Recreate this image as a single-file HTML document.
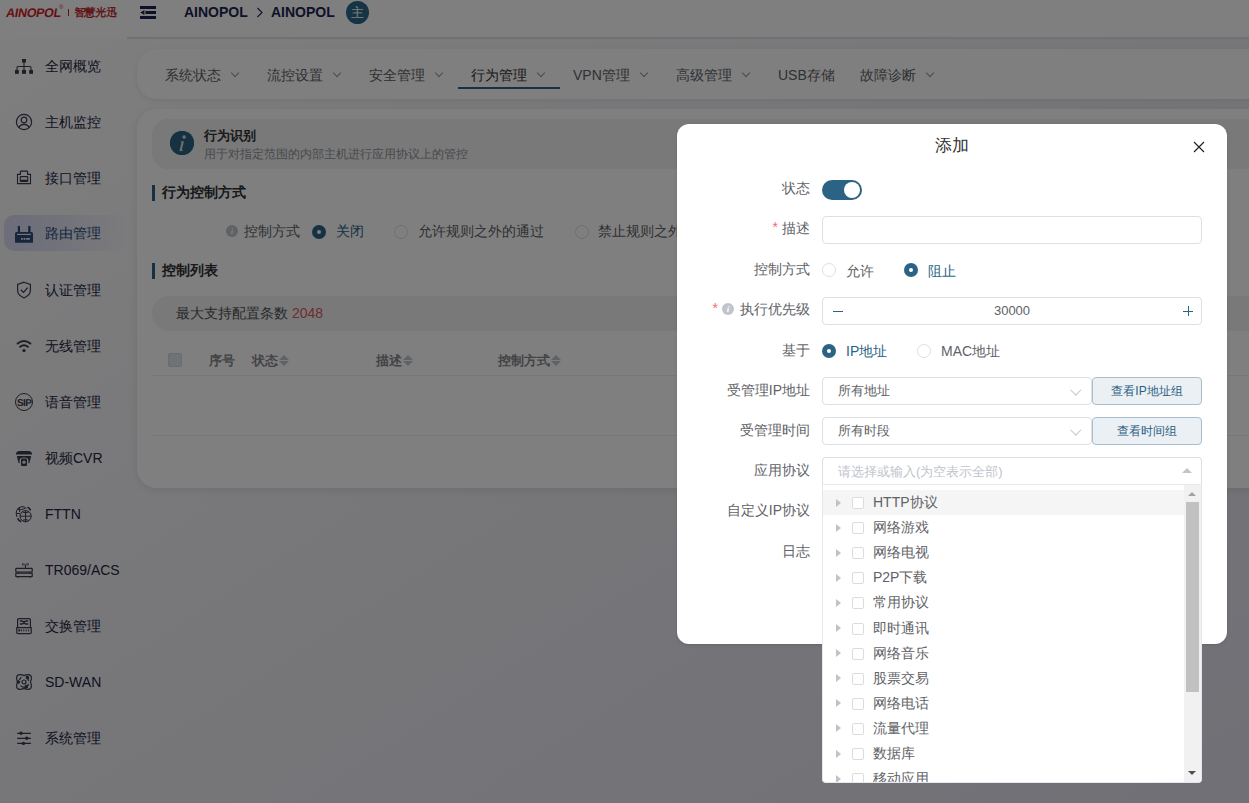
<!DOCTYPE html>
<html><head><meta charset="utf-8">
<style>
*{box-sizing:border-box;margin:0;padding:0}
html,body{width:1249px;height:803px;overflow:hidden}
body{position:relative;background:linear-gradient(to bottom right,#fefefe 0%,#f0f0f5 45%,#e0e0ec 100%);font-family:"Liberation Sans",sans-serif;font-size:14px;color:#303133}
.abs{position:absolute;white-space:nowrap}
#side{left:0;top:0;width:127px;height:803px}
#hdr{left:0;top:0;width:1249px;height:38px;background:#fff}
#hline{left:127px;top:36.8px;width:1122px;height:2px;background:#e2e2e4;box-shadow:0 0 1px rgba(0,0,0,.08)}
.mi{position:absolute;left:0;width:127px;height:36px;line-height:36px}
.mi svg{position:absolute;left:15px;top:9px;width:18px;height:18px}
.mi span{position:absolute;left:45px;top:0;font-size:14px;color:#24263f;white-space:nowrap}
.mi.act{left:4px;width:126px;margin-top:-1.5px;border-radius:10px;background:linear-gradient(90deg,#dadaf6 0%,#e6e6f6 50%,rgba(250,250,252,0) 100%)}
.mi.act svg{left:11px;top:10.5px}
.mi.act span{left:41px;color:#2a4e7e}
#tabs{left:137px;top:48.5px;width:1200px;height:50.5px;background:#fff;border-radius:20px;box-shadow:0 2px 7px rgba(0,0,0,.08)}
.tab{position:absolute;top:0;height:51px;line-height:52px;font-size:14px;color:#606266;white-space:nowrap}
.chev{display:inline-block;width:6px;height:6px;border-right:1px solid #909399;border-bottom:1px solid #909399;transform:rotate(45deg);position:relative;top:-4px;margin-left:11px}
#card{left:137px;top:108.5px;width:1200px;height:379.5px;background:#fff;border-radius:20px;box-shadow:0 2px 10px rgba(0,0,0,.09)}
#mask{left:0;top:0;width:1249px;height:803px;background:rgba(0,0,0,.5)}
#modal{left:677px;top:124px;width:550px;height:519.6px;background:#fff;border-radius:12px;box-shadow:0 1px 3px rgba(0,0,0,.12)}
.lbl{position:absolute;right:439px;font-size:14px;color:#606266;line-height:20px;white-space:nowrap}
.req{color:#f56c6c;margin-right:4px;position:relative;top:-1px}
.radio{position:absolute;width:14px;height:14px;border-radius:50%;border:1px solid #dcdfe6;background:#fff}
.radio.on{border:none;background:#2b6385}
.radio.on:after{content:"";position:absolute;left:5px;top:5px;width:4px;height:4px;border-radius:50%;background:#fff}
.inp{position:absolute;border:1px solid #dcdfe6;border-radius:4px;background:#fff}
.sel-chev{position:absolute;width:7.5px;height:7.5px;border-right:1px solid #c0c4cc;border-bottom:1px solid #c0c4cc;transform:rotate(45deg)}
.btn{position:absolute;border:1px solid #a8bfcf;border-radius:4px;background:#ebf0f5;color:#2b5f80;font-size:12px;text-align:center}
.dd-item{position:absolute;left:0;width:362px;height:25px}
.dd-tri{position:absolute;left:13px;top:8.5px;width:0;height:0;border-top:4.5px solid transparent;border-bottom:4.5px solid transparent;border-left:5px solid #c2c2c2}
.dd-cb{position:absolute;left:29px;top:7px;width:12px;height:12px;border:1px solid #dcdcdc;border-radius:2px;background:#fff}
.dd-t{position:absolute;left:50px;top:2px;line-height:20px;font-size:14px;color:#606266}
.sort{display:inline-block;position:relative;width:10px;height:14px;vertical-align:middle;margin-left:1px;top:-1px}
.sort:before{content:"";position:absolute;left:0;top:1px;border-left:5px solid transparent;border-right:5px solid transparent;border-bottom:5px solid #c0c4cc}
.sort:after{content:"";position:absolute;left:0;top:7px;border-left:5px solid transparent;border-right:5px solid transparent;border-top:5px solid #c0c4cc}
.th{position:absolute;top:351px;font-size:13px;font-weight:bold;color:#85878c;line-height:20px}
</style></head><body>
<div id="hdr0" class="abs" style="left:0;top:0;width:1249px;height:38px;background:#fff"></div>
<div id="side" class="abs">
<div class="abs" style="left:5px;top:4px;height:16px;width:115px">
 <span class="abs" style="left:0;top:2px;font-size:12.5px;font-weight:bold;color:#d01c28;letter-spacing:-.3px;transform:skewX(-10deg);transform-origin:0 100%">AINOPOL</span>
 <span class="abs" style="left:54px;top:0;font-size:6px;color:#d01c28">®</span>
 <span class="abs" style="left:63px;top:5px;width:1px;height:7px;background:#d01c28"></span>
 <span class="abs" style="left:69px;top:1px;font-size:11px;font-family:'Liberation Serif',serif;color:#c01824;letter-spacing:-.3px;transform:skewX(-6deg);-webkit-text-stroke:.35px #c01824">智慧光迅</span>
</div>
<div class="mi" style="top:48px"><svg viewBox="0 0 18 18" fill="#3a3c4c" stroke="#3a3c4c"><rect x="7" y="2" width="4" height="3.6" stroke="none"/><rect x="0" y="13" width="3.8" height="3.8" stroke="none"/><rect x="7" y="13" width="4" height="3.8" stroke="none"/><rect x="14.2" y="13" width="3.8" height="3.8" stroke="none"/><path d="M9 5.5V13M2 13V10.5Q2 9.5 3 9.5H15Q16 9.5 16 10.5V13" fill="none" stroke-width="1.1"/></svg><span>全网概览</span></div>
<div class="mi" style="top:104px"><svg viewBox="0 0 18 18" fill="none" stroke="#3a3c4c" stroke-width="1.2"><circle cx="9" cy="9" r="7.6"/><circle cx="9" cy="7" r="2.8"/><path d="M3.6 14.4Q5.5 11.3 9 11.3Q12.5 11.3 14.4 14.4"/></svg><span>主机监控</span></div>
<div class="mi" style="top:160px"><svg viewBox="0 0 18 18" fill="none" stroke="#3a3c4c" stroke-width="1.1"><path d="M2.5 14.6V5.4H5.4V2.6Q5.4 2.1 5.9 2.1H12.1Q12.6 2.1 12.6 2.6V5.4H15.5V14.6Z"/><rect x="5.3" y="7.6" width="7.4" height="4.8" rx=".5"/><path d="M5.6 11.4H12.4" stroke-width="1.4"/></svg><span>接口管理</span></div>
<div class="mi act" style="top:216px"><svg viewBox="0 0 18 18" fill="#2a4c7a"><rect x="2.8" y="1" width="2.2" height="7"/><rect x="13.2" y="1" width="2.3" height="7"/><path d="M1.6 7H16.4Q18 7 18 8.6V17.7H0V8.6Q0 7 1.6 7Z"/><rect x="2" y="8.8" width="14" height="1.2" fill="#e6e8f4"/><rect x="6" y="13" width="1.8" height="1.8" fill="#e6e8f4"/><rect x="8.6" y="13" width="1.8" height="1.8" fill="#e6e8f4"/><rect x="11.2" y="13" width="3.6" height="1.8" fill="#e6e8f4"/></svg><span>路由管理</span></div>
<div class="mi" style="top:272px"><svg viewBox="0 0 18 18" fill="none" stroke="#3a3c4c" stroke-width="1.2"><path d="M9 1.2L15.4 3.4V9.6Q15.4 14.2 9 17Q2.6 14.2 2.6 9.6V3.4Z"/><path d="M5.8 8.8L8.5 11.4L12.6 6.6"/></svg><span>认证管理</span></div>
<div class="mi" style="top:328px"><svg viewBox="0 0 18 18" fill="none" stroke="#3a3c4c" stroke-width="1.9" stroke-linecap="round"><path d="M2.6 6.6Q9 1.4 15.4 6.6"/><path d="M5.1 9.8Q9 6.6 12.9 9.8"/><circle cx="9" cy="13.6" r="1.6" fill="#3a3c4c" stroke="none"/></svg><span>无线管理</span></div>
<div class="mi" style="top:384px"><svg viewBox="0 0 18 18"><circle cx="9" cy="9" r="8.5" fill="none" stroke="#3a3c4c" stroke-width="1"/><text x="9.2" y="12.6" font-family="Liberation Sans" font-weight="bold" font-size="10" letter-spacing="-.6" text-anchor="middle" fill="#3a3c4c" style="text-rendering:geometricPrecision">SIP</text></svg><span>语音管理</span></div>
<div class="mi" style="top:440px"><svg viewBox="0 0 18 18" fill="#3a3c4c"><path d="M1 4.2Q1.5 2.2 4 2H14Q16.5 2.2 17 4.2V5.4H1Z"/><path d="M1.8 7H16.2L14.6 13.6Q14 14.5 13.4 14.5V11.2Q13.4 8.4 9 8.4Q4.6 8.4 4.6 11.2V14.5Q4 14.5 3.4 13.6Z"/><path d="M6 10.4Q6 9.4 7 9.4H11Q12 9.4 12 10.4V16Q12 17 11 17H7Q6 17 6 16Z"/><circle cx="9" cy="13.2" r="1.8" fill="#dcdcdc"/></svg><span>视频CVR</span></div>
<div class="mi" style="top:496px"><svg viewBox="0 0 18 18" fill="none" stroke="#3a3c4c" stroke-width="1"><path d="M2 12Q0.6 8.6 1.6 5.6Q3 1.8 7 1.6Q9.8 1.6 11.4 3.6"/><path d="M2.2 4.2Q6 5.6 10.2 3.4M1.5 8.5H4.8M4.5 2.6Q4 5 4.8 7.2"/><path d="M12.4 2.2Q14.6 3 15.6 5.4" stroke-width="1.6"/><path d="M2.6 13.4Q3.6 15.6 6.2 16.8" stroke-width="1.6"/><circle cx="10.6" cy="11.2" r="5.6"/><path d="M5 11.2H16.2M10.6 5.6V16.8M7.4 7Q10.6 8.6 13.8 7M7.4 15.4Q10.6 13.8 13.8 15.4"/></svg><span>FTTN</span></div>
<div class="mi" style="top:552px"><svg viewBox="0 0 18 18" fill="none" stroke="#3a3c4c" stroke-width="1.1"><path d="M10.4 3.6V7.4"/><path d="M8 2Q7.2 3.4 8 4.8M12.8 2Q13.6 3.4 12.8 4.8M9.2 2.6Q8.8 3.4 9.2 4.2M11.6 2.6Q12 3.4 11.6 4.2" stroke-width=".9"/><rect x="0.8" y="7.4" width="16.4" height="3.6" rx=".4" stroke-width="1.2"/><rect x="0.8" y="12.2" width="16.4" height="3.4" rx=".4" stroke-width="1.2"/><path d="M3 11V12.2M15 11V12.2M3 15.6V16.6M15 15.6V16.6" stroke-width="1.4"/></svg><span>TR069/ACS</span></div>
<div class="mi" style="top:608px"><svg viewBox="0 0 18 18" fill="none" stroke="#3a3c4c" stroke-width="1.2"><path d="M2.6 10.6V2.8Q2.6 1.6 3.8 1.6H14.2Q15.4 1.6 15.4 2.8V10.6"/><path d="M1.8 10.6H16.2V15.6Q16.2 16.6 15.2 16.6H2.8Q1.8 16.6 1.8 15.6Z"/><path d="M4.8 4H6.8Q8.2 4 9 5.5Q9.8 7 11.2 7H13.2M4.8 7H6.8Q8.2 7 9 5.5Q9.8 4 11.2 4H13.2" stroke-width="1.3"/><path d="M6.4 12.4V14.4M8.8 12.4V14.4M11.2 12.4V14.4M13.6 12.4V14.4" stroke-width="1"/><circle cx="4.2" cy="13.4" r=".5" fill="#3a3c4c"/></svg><span>交换管理</span></div>
<div class="mi" style="top:664px"><svg viewBox="0 0 18 18" fill="none" stroke="#3a3c4c" stroke-width="1.2"><path d="M5 1.6Q7 1.6 9 2.6Q11 1.6 13 1.6Q16.4 1.6 16.4 5Q16.4 7 15.4 9Q16.4 11 16.4 13Q16.4 16.4 13 16.4Q11 16.4 9 15.4Q7 16.4 5 16.4Q1.6 16.4 1.6 13Q1.6 11 2.6 9Q1.6 7 1.6 5Q1.6 1.6 5 1.6Z"/><circle cx="9" cy="9" r="2"/><path d="M4.4 7Q5 5 6.4 4.2M13.6 11Q13 13 11.6 13.8M5.4 12.6Q8 14.8 11.4 14.2M12.6 5.4Q13.6 6.6 13.4 8"/><circle cx="12.4" cy="4.6" r="1.2" fill="#3a3c4c"/><circle cx="3.4" cy="9" r="1.2" fill="#3a3c4c"/><circle cx="11.4" cy="13.6" r="1.2" fill="#3a3c4c"/></svg><span>SD-WAN</span></div>
<div class="mi" style="top:720px"><svg viewBox="0 0 18 18" fill="#3a3c4c" stroke="#3a3c4c" stroke-width="1.3"><path d="M2.2 4.3H15.9M2.2 9.3H15.9M2.2 14.4H15.9"/><circle cx="6" cy="4.3" r="1.7" stroke="none"/><circle cx="11.8" cy="9.3" r="1.7" stroke="none"/><circle cx="8.4" cy="14.4" r="1.7" stroke="none"/></svg><span>系统管理</span></div>
</div>
<div id="hline" class="abs"></div>
<svg class="abs" style="left:140px;top:5px" width="17" height="15" viewBox="0 0 17 15"><rect x="0" y="1" width="16" height="3" fill="#1a2550"/><rect x="5.4" y="6" width="10.6" height="3" fill="#1a2550"/><rect x="0" y="11" width="16" height="3" fill="#1a2550"/><path d="M0.3 7.5L4.4 4.9V10.1Z" fill="#1a2550"/></svg>
<div class="abs" style="left:184px;top:4px;font-size:14px;font-weight:bold;color:#1d2550;line-height:16px">AINOPOL</div>
<svg class="abs" style="left:256px;top:7px" width="8" height="11" viewBox="0 0 8 11"><path d="M1.5 1L6 5.5L1.5 10" fill="none" stroke="#1d2550" stroke-width="1.1"/></svg>
<div class="abs" style="left:271px;top:4px;font-size:14px;font-weight:bold;color:#1d2550;line-height:16px">AINOPOL</div>
<div class="abs" style="left:346px;top:0.5px;width:23px;height:23px;border-radius:50%;background:#2c6888;color:#fff;font-size:13px;line-height:23px;text-align:center">主</div>

<div id="tabs" class="abs">
 <div class="tab" style="left:28px">系统状态<i class="chev"></i></div>
 <div class="tab" style="left:130px">流控设置<i class="chev"></i></div>
 <div class="tab" style="left:232px">安全管理<i class="chev"></i></div>
 <div class="tab" style="left:334px;color:#303133">行为管理<i class="chev"></i></div>
 <div class="abs" style="left:321px;top:38.5px;width:102px;height:2px;background:#2b6385"></div>
 <div class="tab" style="left:436px">VPN管理<i class="chev"></i></div>
 <div class="tab" style="left:539px">高级管理<i class="chev"></i></div>
 <div class="tab" style="left:641px">USB存储</div>
 <div class="tab" style="left:723px">故障诊断<i class="chev"></i></div>
</div>

<div id="card" class="abs">
 <div class="abs" style="left:15px;top:10.5px;width:1200px;height:50px;border-radius:16px;background:#f2f2f3"></div>
 <svg class="abs" style="left:33px;top:22.8px" width="24" height="24" viewBox="0 0 24 24"><circle cx="12" cy="12" r="12.2" fill="#2b6385"/><circle cx="14.1" cy="6.1" r="1.8" fill="#d6dade"/><path d="M10.8 10.2H14L11.9 18.6Q11.7 19.3 12.5 18.9L13.2 18.5L12.9 19.6Q11.6 20.3 10.5 20.3Q9.3 20.3 9.6 19.1L11.6 11.1L10.6 11.2Z" fill="#d6dade"/></svg>
 <div class="abs" style="left:67px;top:18px;font-size:13px;font-weight:bold;color:#303133;line-height:18px">行为识别</div>
 <div class="abs" style="left:67px;top:37px;font-size:12px;color:#909399;line-height:16px">用于对指定范围的内部主机进行应用协议上的管控</div>

 <div class="abs" style="left:15px;top:76px;width:3px;height:16px;background:#2b6385"></div>
 <div class="abs" style="left:25px;top:73.5px;font-size:14px;font-weight:bold;color:#303133;line-height:20px">行为控制方式</div>

 <div class="abs" style="left:89px;top:116px;width:12px;height:12px;border-radius:50%;background:#c0c4cc;color:#fff;font-family:'Liberation Serif',serif;font-style:italic;font-weight:bold;font-size:9px;line-height:12px;text-align:center">i</div>
 <div class="abs" style="left:107px;top:112px;font-size:14px;color:#606266;line-height:20px">控制方式</div>
 <div class="radio on" style="left:175px;top:116px"></div>
 <div class="abs" style="left:199px;top:112px;font-size:14px;color:#2b6385;line-height:20px">关闭</div>
 <div class="radio" style="left:257px;top:116px"></div>
 <div class="abs" style="left:281px;top:112px;font-size:14px;color:#606266;line-height:20px">允许规则之外的通过</div>
 <div class="radio" style="left:438px;top:116px"></div>
 <div class="abs" style="left:461px;top:112px;font-size:14px;color:#606266;line-height:20px">禁止规则之外的通过</div>

 <div class="abs" style="left:15px;top:154px;width:3px;height:16px;background:#2b6385"></div>
 <div class="abs" style="left:25px;top:151.5px;font-size:14px;font-weight:bold;color:#303133;line-height:20px">控制列表</div>

 <div class="abs" style="left:15px;top:187px;width:1200px;height:35px;border-radius:17px;background:#f2f2f3"></div>
 <div class="abs" style="left:39px;top:194px;font-size:14px;color:#505256;line-height:20px">最大支持配置条数 <span style="color:#e05a5f">2048</span></div>

 <div class="abs" style="left:31px;top:244px;width:14px;height:14px;border:1px solid #d2d7e0;border-radius:2px;background:#dfe4ec"></div>
</div>
<div class="th" style="left:209px">序号</div>
<div class="th" style="left:252px">状态<i class="sort"></i></div>
<div class="th" style="left:376px">描述<i class="sort"></i></div>
<div class="th" style="left:498px">控制方式<i class="sort"></i></div>
<div class="abs" style="left:152px;top:375px;width:1100px;height:1px;background:#ebeef5"></div>
<div class="abs" style="left:152px;top:435px;width:1100px;height:1px;background:#ebeef5"></div>

<div id="mask" class="abs"></div>

<div id="modal" class="abs">
 <div class="abs" style="left:0;top:11px;width:550px;text-align:center;font-size:17px;color:#303133;line-height:22px">添加</div>
 <svg class="abs" style="left:516px;top:17px" width="12" height="12" viewBox="0 0 12 12"><path d="M1 1L11 11M11 1L1 11" stroke="#202020" stroke-width="1.15"/></svg>
</div>
<div class="lbl" style="top:178.3px">状态</div>
<div class="abs" style="left:822px;top:180px;width:40px;height:20px;border-radius:10px;background:#2b6385"><div class="abs" style="left:21.8px;top:2px;width:16px;height:16px;border-radius:50%;background:#fff"></div></div>
<div class="lbl" style="top:218.3px"><span class="req">*</span>描述</div>
<div class="inp" style="left:822px;top:216px;width:380px;height:28px"></div>
<div class="lbl" style="top:259.3px">控制方式</div>
<div class="radio" style="left:822px;top:263px"></div>
<div class="abs" style="left:846px;top:260.5px;font-size:14px;color:#606266;line-height:20px">允许</div>
<div class="radio on" style="left:904px;top:263px"></div>
<div class="abs" style="left:928px;top:260.5px;font-size:14px;color:#2b6385;line-height:20px">阻止</div>
<div class="lbl" style="top:299.3px"><span class="req">*</span><span style="display:inline-block;width:12px;height:12px;border-radius:50%;background:#c0c4cc;color:#fff;font-family:'Liberation Serif',serif;font-style:italic;font-weight:bold;font-size:9px;line-height:12px;text-align:center;vertical-align:2px;margin-right:6px">i</span>执行优先级</div>
<div class="inp" style="left:822px;top:297px;width:380px;height:28px">
 <div class="abs" style="left:10px;top:12.5px;width:10px;height:1px;background:#2b6385"></div>
 <div class="abs" style="left:0;top:4px;width:378px;text-align:center;font-size:13px;color:#606266;line-height:18px">30000</div>
 <div class="abs" style="left:360px;top:8px;width:10px;height:10px"><div class="abs" style="left:0;top:4.5px;width:10px;height:1px;background:#2b6385"></div><div class="abs" style="left:4.5px;top:0;width:1px;height:10px;background:#2b6385"></div></div>
</div>
<div class="lbl" style="top:339.8px">基于</div>
<div class="radio on" style="left:822px;top:344px"></div>
<div class="abs" style="left:846px;top:341px;font-size:14px;color:#2b6385;line-height:20px">IP地址</div>
<div class="radio" style="left:917px;top:344px"></div>
<div class="abs" style="left:941px;top:341px;font-size:14px;color:#606266;line-height:20px">MAC地址</div>

<div class="lbl" style="top:379.8px">受管理IP地址</div>
<div class="inp" style="left:822px;top:377px;width:270px;height:28px"><div class="abs" style="left:15px;top:3px;font-size:13px;color:#606266;line-height:20px">所有地址</div><div class="sel-chev" style="left:249px;top:7.5px"></div></div>
<div class="btn" style="left:1092px;top:377px;width:110px;height:28px;line-height:26px">查看IP地址组</div>
<div class="lbl" style="top:419.8px">受管理时间</div>
<div class="inp" style="left:822px;top:417px;width:270px;height:28px"><div class="abs" style="left:15px;top:3px;font-size:13px;color:#606266;line-height:20px">所有时段</div><div class="sel-chev" style="left:249px;top:7.5px"></div></div>
<div class="btn" style="left:1092px;top:417px;width:110px;height:28px;line-height:26px">查看时间组</div>
<div class="lbl" style="top:459.8px">应用协议</div>
<div class="inp" style="left:822px;top:457px;width:380px;height:28px;border-radius:4px 4px 0 0;border-bottom-color:#e8eaee"><div class="abs" style="left:15px;top:4px;font-size:13px;color:#c0c4cc;line-height:20px">请选择或输入(为空表示全部)</div><div class="abs" style="left:358.5px;top:10px;border-left:5px solid transparent;border-right:5px solid transparent;border-bottom:5px solid #c0c4cc"></div></div>
<div class="lbl" style="top:499.8px">自定义IP协议</div>
<div class="lbl" style="top:540.8px">日志</div>

<div id="dd" class="abs" style="left:822px;top:485px;width:380px;height:298px;background:#fff;border:1px solid #e4e7ed;border-top:none;border-radius:0 0 4px 4px;overflow:hidden">
<div class="dd-item" style="top:5.0px;background:#f5f5f5;"><i class="dd-tri"></i><i class="dd-cb"></i><span class="dd-t">HTTP协议</span></div>
<div class="dd-item" style="top:30.1px;"><i class="dd-tri"></i><i class="dd-cb"></i><span class="dd-t">网络游戏</span></div>
<div class="dd-item" style="top:55.2px;"><i class="dd-tri"></i><i class="dd-cb"></i><span class="dd-t">网络电视</span></div>
<div class="dd-item" style="top:80.3px;"><i class="dd-tri"></i><i class="dd-cb"></i><span class="dd-t">P2P下载</span></div>
<div class="dd-item" style="top:105.4px;"><i class="dd-tri"></i><i class="dd-cb"></i><span class="dd-t">常用协议</span></div>
<div class="dd-item" style="top:130.5px;"><i class="dd-tri"></i><i class="dd-cb"></i><span class="dd-t">即时通讯</span></div>
<div class="dd-item" style="top:155.6px;"><i class="dd-tri"></i><i class="dd-cb"></i><span class="dd-t">网络音乐</span></div>
<div class="dd-item" style="top:180.7px;"><i class="dd-tri"></i><i class="dd-cb"></i><span class="dd-t">股票交易</span></div>
<div class="dd-item" style="top:205.8px;"><i class="dd-tri"></i><i class="dd-cb"></i><span class="dd-t">网络电话</span></div>
<div class="dd-item" style="top:230.9px;"><i class="dd-tri"></i><i class="dd-cb"></i><span class="dd-t">流量代理</span></div>
<div class="dd-item" style="top:256.0px;"><i class="dd-tri"></i><i class="dd-cb"></i><span class="dd-t">数据库</span></div>
<div class="dd-item" style="top:281.1px;"><i class="dd-tri"></i><i class="dd-cb"></i><span class="dd-t">移动应用</span></div>
 <div class="abs" style="left:361px;top:0;width:17px;height:298px;background:#f1f1f1"></div>
 <div class="abs" style="left:363px;top:17px;width:13px;height:190px;background:#c1c1c1"></div>
 <div class="abs" style="left:365px;top:7px;border-left:4px solid transparent;border-right:4px solid transparent;border-bottom:4px solid #a3a3a3"></div>
 <div class="abs" style="left:365px;top:286px;border-left:4px solid transparent;border-right:4px solid transparent;border-top:4px solid #505050"></div>
</div>
</body></html>
